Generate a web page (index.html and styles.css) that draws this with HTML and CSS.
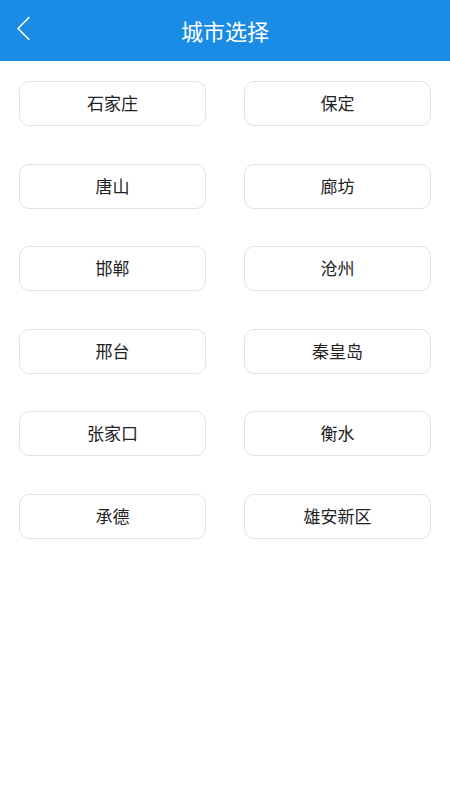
FILE: index.html
```html
<!DOCTYPE html>
<html lang="zh-CN">
<head>
  <meta charset="UTF-8" />
  <meta name="viewport" content="width=device-width, initial-scale=1.0"/>
  <title>城市选择</title>
  <link rel="stylesheet" href="styles.css">
</head>
<body>

<div class="header">
  <a class="back" href="#">
    <svg width="16" height="26" viewBox="0 0 16 26">
      <polyline points="13,1.5 2,12.5 13,23.5" fill="none" stroke="#fff" stroke-width="1.6" stroke-linecap="round" stroke-linejoin="round"/>
    </svg>
  </a>
  <h1>城市选择</h1>
</div>

<div class="city-list">
  <button class="city">石家庄</button>
  <button class="city">保定</button>
  <button class="city">唐山</button>
  <button class="city">廊坊</button>
  <button class="city">邯郸</button>
  <button class="city">沧州</button>
  <button class="city">邢台</button>
  <button class="city">秦皇岛</button>
  <button class="city">张家口</button>
  <button class="city">衡水</button>
  <button class="city">承德</button>
  <button class="city">雄安新区</button>
</div>

</body>
</html>
```

FILE: styles.css
```css
body {
  margin: 0;
  font-family: "Noto Sans CJK SC", "Noto Sans", sans-serif;
  background: #fff;
}
.header {
  height: 61px;
  background: #1a8ce5;
  display: flex;
  align-items: center;
  justify-content: center;
  position: relative;
}
.header h1 {
  margin: 0 0 2px;
  color: #fff;
  font-size: 22px;
  font-weight: normal;
  line-height: 1;
}
.back {
  position: absolute;
  left: 16px;
  top: 16px;
  display: block;
  line-height: 0;
}
.city-list {
  display: grid;
  grid-template-columns: 1fr 1fr;
  column-gap: 38px;
  row-gap: 37.5px;
  padding: 20px 19px;
}
.city {
  height: 45px;
  background: #fff;
  border: 1px solid #e2e2e2;
  border-radius: 10px;
  font-family: inherit;
  font-size: 17px;
  color: #222;
  padding: 0 0 2px;
  cursor: pointer;
}
```
